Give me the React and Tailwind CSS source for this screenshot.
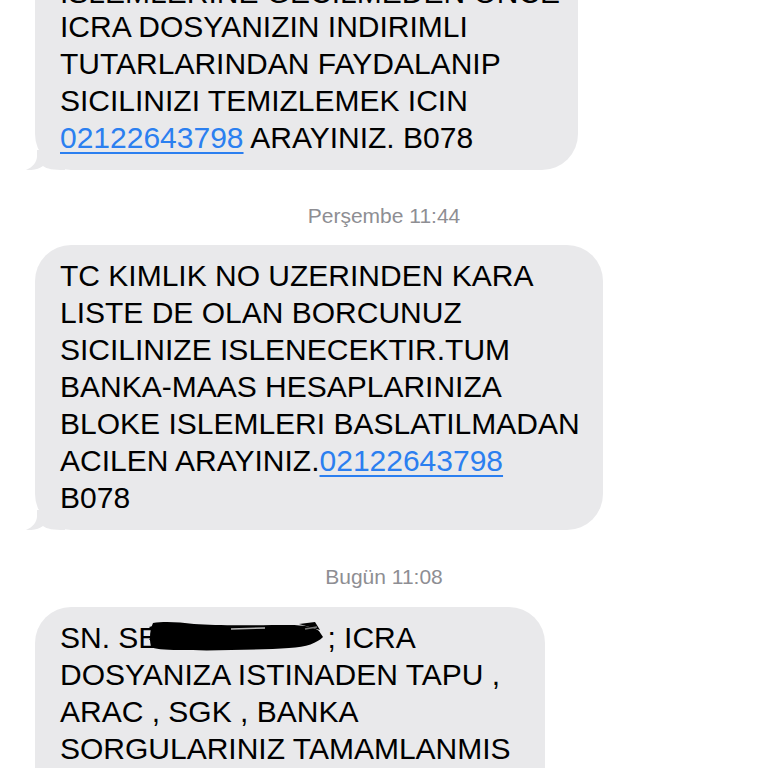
const LINK = 'text-[#2b7ff0] underline decoration-[1.5px] underline-offset-[4px]';

const Tail = () => (
    <svg
        className="absolute left-[-10px] bottom-0"
        width="40"
        height="20"
        viewBox="0 0 40 20"
    >
        <path
            d="M12 0 L12 6 C12 12 8 17 1 20 C8 20.5 14 19 18 16 C22 19 28 20 40 20 L40 0 Z"
            fill="#e9e9eb"
        />
    </svg>
);

const Bubble = ({ width, tail = true, children }) => (
    <div
        className={`relative ml-[35px] bg-[#e9e9eb] rounded-[36px] pl-[25px] pt-3 pb-[14px] text-[30px] leading-[37px] text-black ${width}`}
    >
        {tail && <Tail />}
        <div className="relative">{children}</div>
    </div>
);

const Stamp = ({ children, className = '' }) => (
    <div
        className={`text-center text-[21px] leading-[25px] text-[#8e8e93] font-medium ${className}`}
    >
        {children}
    </div>
);

const Scribble = () => (
    <span className="relative inline-block w-[169px] h-0">
        <svg
            className="absolute left-[-9px] top-[-27px]"
            width="178"
            height="31"
            viewBox="0 0 178 31"
        >
            <path
                d="M4 2 C15 0 30 1 45 3 C70 5 110 4 140 4 C155 4 165 6 170 10 L174 16 C168 22 158 26 140 27 C110 29 60 30 30 29 C15 29 5 28 2 26 C0 18 1 8 4 2 Z"
                fill="#000"
            />
            <path d="M0 6 L8 4 L6 12 Z M0 18 L6 16 L5 24 Z" fill="#000" />
            <path d="M82 8 L116 7" stroke="#b8b8b8" strokeWidth="1.5" />
            <path d="M150 3 L166 1 L171 9 Z" fill="#000" />
            <path d="M156 8 L168 6" stroke="#777" strokeWidth="1.5" />
        </svg>
    </span>
);

export default function App() {
    return (
        <div className="w-full h-[768px] overflow-hidden bg-white font-['Liberation_Sans',Arial,sans-serif]">
            <div className="flex flex-col mt-[-41px]">
                <Bubble width="w-[543px]">
                    <div className="relative top-[3px] whitespace-nowrap">ISLEMLERINE GECILMEDEN ONCE</div>
                    <div className="whitespace-nowrap">ICRA DOSYANIZIN INDIRIMLI</div>
                    <div className="whitespace-nowrap">TUTARLARINDAN FAYDALANIP</div>
                    <div className="whitespace-nowrap">SICILINIZI TEMIZLEMEK ICIN</div>
                    <div className="whitespace-nowrap">
                        <span className={LINK}>02122643798</span> ARAYINIZ. B078
                    </div>
                </Bubble>

                <Stamp className="mt-[33px] mb-[17px]">Perşembe 11:44</Stamp>

                <Bubble width="w-[568px]">
                    <div className="whitespace-nowrap">TC KIMLIK NO UZERINDEN KARA</div>
                    <div className="whitespace-nowrap">LISTE DE OLAN BORCUNUZ</div>
                    <div className="whitespace-nowrap">SICILINIZE ISLENECEKTIR.TUM</div>
                    <div className="whitespace-nowrap">BANKA-MAAS HESAPLARINIZA</div>
                    <div className="whitespace-nowrap">BLOKE ISLEMLERI BASLATILMADAN</div>
                    <div className="whitespace-nowrap">
                        ACILEN ARAYINIZ.<span className={LINK}>02122643798</span>
                    </div>
                    <div className="whitespace-nowrap">B078</div>
                </Bubble>

                <Stamp className="mt-[34px] mb-[18px]">Bugün 11:08</Stamp>

                <Bubble width="w-[510px]" tail={false}>
                    <div className="whitespace-nowrap">
                        SN. SE<Scribble />; ICRA
                    </div>
                    <div className="whitespace-nowrap">DOSYANIZA ISTINADEN TAPU ,</div>
                    <div className="whitespace-nowrap">ARAC , SGK , BANKA</div>
                    <div className="whitespace-nowrap">SORGULARINIZ TAMAMLANMIS</div>
                    <div className="whitespace-nowrap">OLUP DOSYANIZ AVUKATA</div>
                </Bubble>
            </div>
        </div>
    );
}
